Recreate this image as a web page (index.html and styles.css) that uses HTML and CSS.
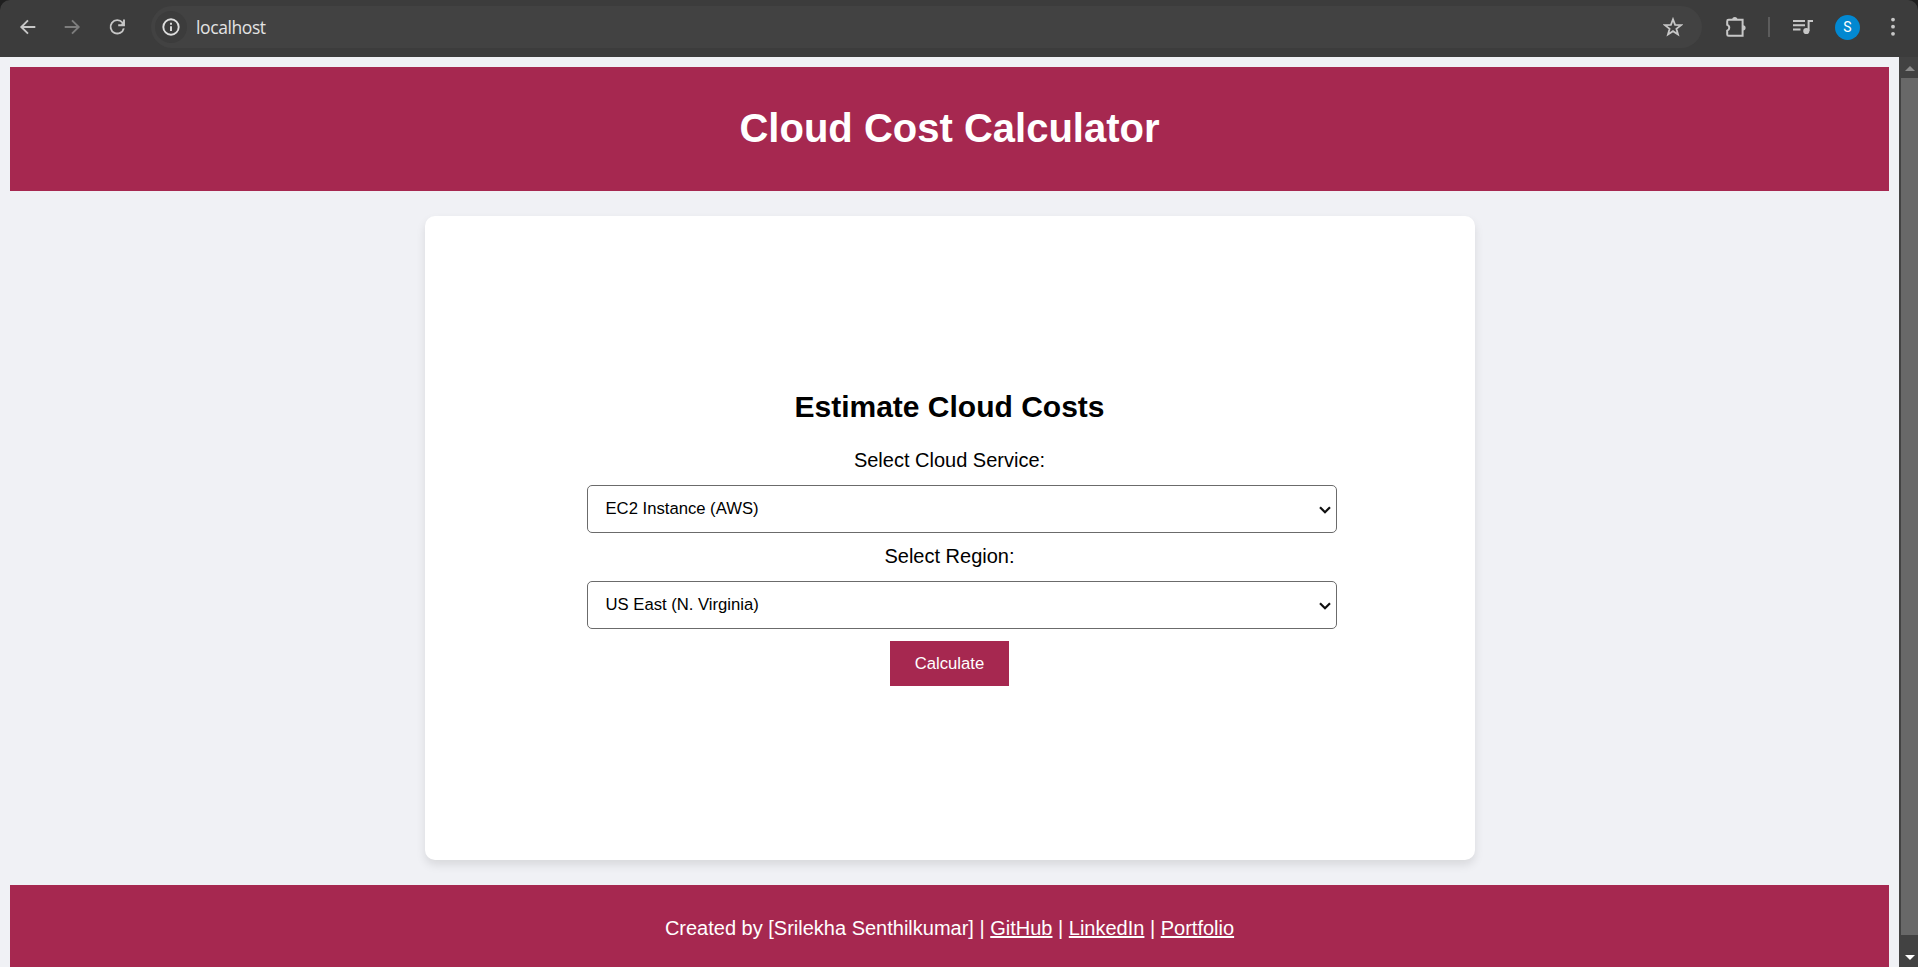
FILE: index.html
```html
<!DOCTYPE html>
<html lang="en">
<head>
<meta charset="utf-8">
<title>Cloud Cost Calculator</title>
<link rel="stylesheet" href="styles.css">
</head>
<body>
<div class="toolbar">
  <svg class="icon back" viewBox="0 0 20 20"><path d="M17.3 10H3.5M10 3.3 3.3 10l6.7 6.7"/></svg>
  <svg class="icon forward" viewBox="0 0 20 20"><path d="M2.7 10h13.8M10 3.3l6.7 6.7-6.7 6.7"/></svg>
  <svg class="icon reload" viewBox="0 0 20 20"><path d="M16.8 11.4A6.7 6.7 0 1 1 15.4 5.5L17 7.4M17 2.4v5.8h-5.8M16.4 5.2v2.2h-2.2"/></svg>
  <div class="address">
    <span class="site"><svg class="icon" viewBox="0 0 20 20"><circle cx="10" cy="10" r="7.7"/><path d="M10 9.2v4.7M10 5.8v1.9"/></svg></span>
    <span class="url">localhost</span>
    <svg class="icon star" viewBox="0 0 20 20"><path d="M10 2.3l2.1 5.5 6 .3-4.7 3.7 1.6 5.7-5-3.3-5 3.3 1.6-5.7L1.9 8.1l6-.3z"/></svg>
  </div>
  <svg class="puzzle" viewBox="0 0 24 24"><path class="line" d="M4.6 4.8h14v16h-14a1.4 1.4 0 0 1-1.4-1.4v-3.8a3 3 0 0 0 0-5.7V6.2a1.4 1.4 0 0 1 1.4-1.4z"/><path class="fill" d="M8.2 4.5a2.6 2.6 0 0 1 5.2 0zM19 10.2a2.6 2.6 0 0 1 0 5.2z"/></svg>
  <span class="divider"></span>
  <svg class="media" viewBox="0 0 20 16"><path class="line" d="M0 2h12M0 6.2h12M0 10.4h7.5M15.6 12V2h4.4"/><circle class="fill" cx="13.3" cy="12" r="3.1"/></svg>
  <span class="avatar">S</span>
  <svg class="dots" viewBox="0 0 6 20"><circle cx="3" cy="2.6" r="1.9"/><circle cx="3" cy="9.7" r="1.9"/><circle cx="3" cy="16.8" r="1.9"/></svg>
</div>
<div class="viewport">
  <div class="page">
    <header class="header"><h1>Cloud Cost Calculator</h1></header>
    <main class="card">
      <h2>Estimate Cloud Costs</h2>
      <label for="service">Select Cloud Service:</label>
      <div class="field">
        <select id="service"><option>EC2 Instance (AWS)</option></select>
        <svg class="chevron" viewBox="0 0 12 8"><path d="M1 1.2l5 5 5-5"/></svg>
      </div>
      <label for="region">Select Region:</label>
      <div class="field">
        <select id="region"><option>US East (N. Virginia)</option></select>
        <svg class="chevron" viewBox="0 0 12 8"><path d="M1 1.2l5 5 5-5"/></svg>
      </div>
      <button class="calculate">Calculate</button>
    </main>
    <footer class="footer">Created by [Srilekha Senthilkumar] | <a href="#">GitHub</a> | <a href="#">LinkedIn</a> | <a href="#">Portfolio</a></footer>
  </div>
  <div class="scrollbar">
    <svg class="arrow up" viewBox="0 0 10 5"><path d="M0 5l5-5 5 5z"/></svg>
    <span class="thumb"></span>
    <svg class="arrow down" viewBox="0 0 10 5"><path d="M0 0l5 5 5-5z"/></svg>
  </div>
</div>
</body>
</html>
```

FILE: styles.css
```css
* { box-sizing: border-box; }
body {
  margin: 0;
  height: 967px;
  overflow: hidden;
  display: flex;
  flex-direction: column;
  background: #1f1f1f;
  font-family: "Liberation Sans", Arial, sans-serif;
}
.toolbar {
  flex: none;
  height: 57px;
  padding: 6px 22px 9px 18px;
  display: flex;
  align-items: center;
  background: #3c3c3c;
  border-radius: 10px 10px 0 0;
}
.icon {
  flex: none;
  width: 20px;
  height: 20px;
  fill: none;
  stroke: #c7c7c7;
  stroke-width: 1.9;
}
.back { margin-right: 24px; }
.forward { margin-right: 25px; stroke: #7d7d7d; }
.reload { margin-right: 24px; }
.address {
  width: 1551px;
  height: 42px;
  padding: 0 19px 0 4px;
  display: flex;
  align-items: center;
  background: #424242;
  border-radius: 21px;
}
.site {
  width: 32px;
  height: 32px;
  display: grid;
  place-items: center;
  border-radius: 50%;
  background: #3c3c3c;
}
.site .icon { stroke: #dedede; }
.url {
  margin-left: 9px;
  flex: 1;
  color: #e3e3e3;
  font: 17.5px/24px "Open Sans", "Noto Sans", sans-serif;
  letter-spacing: -0.4px;
}
.star { stroke-width: 1.8; }
.puzzle { width: 24px; height: 24px; margin-left: 22px; }
.line { fill: none; stroke: #c7c7c7; stroke-width: 2; }
.fill { fill: #c7c7c7; }
.divider { width: 2px; height: 20px; margin-left: 20px; background: #5c5c5c; }
.media { width: 20px; height: 16px; margin-left: 23px; }
.avatar {
  width: 25px;
  height: 25px;
  margin-left: 22px;
  border-radius: 50%;
  background: #0288d1;
  color: #fff;
  font: 14px/25px Roboto, sans-serif;
  text-align: center;
}
.dots { width: 6px; height: 20px; margin-left: auto; fill: #c7c7c7; }
.viewport { flex: 1; min-height: 0; display: flex; }
.page {
  flex: 1;
  padding: 10px 10px 0;
  overflow: hidden;
  background: #f0f1f5;
}
.header {
  height: 124px;
  padding-top: 38px;
  background: #a62850;
  color: #fff;
  text-align: center;
}
h1 { margin: 0; font-size: 40px; line-height: 46px; }
.card {
  width: 1050px;
  height: 644px;
  margin: 25px auto;
  padding-top: 174px;
  display: flex;
  flex-direction: column;
  align-items: center;
  background: #fff;
  border-radius: 10px;
  box-shadow: 0 5px 10px rgba(0, 0, 0, 0.1);
}
h2 { margin: 0 0 24px; font-size: 30px; line-height: 34px; }
label { margin-bottom: 13px; font-size: 20px; line-height: 24px; }
.field {
  position: relative;
  width: 750px;
  margin: 0 0 11px 24px;
}
select {
  display: block;
  width: 100%;
  height: 48px;
  padding: 0 18px 2px 18px;
  appearance: none;
  border: 1px solid #6b6b6b;
  border-radius: 5px;
  background: #fff;
  color: #000;
  font: 16.67px "Liberation Sans", Arial, sans-serif;
}
.chevron {
  position: absolute;
  right: 6px;
  top: 21px;
  width: 12px;
  height: 8px;
  fill: none;
  stroke: #101010;
  stroke-width: 2.2;
}
.calculate {
  width: 119px;
  height: 45px;
  margin-top: 1px;
  padding: 0;
  border: 0;
  background: #a62850;
  color: #fff;
  font: 16.67px "Liberation Sans", Arial, sans-serif;
}
.footer {
  height: 100px;
  padding-top: 31px;
  background: #a62850;
  color: #fff;
  font-size: 20px;
  line-height: 24px;
  text-align: center;
}
.footer a { color: #fff; }
.scrollbar {
  width: 19px;
  padding: 9px 0 7px 2px;
  display: flex;
  flex-direction: column;
  align-items: center;
  background: #424242;
}
.arrow { flex: none; width: 10px; height: 5px; }
.up { fill: #8b8b8b; }
.down { fill: #fff; }
.thumb { width: 17px; height: 857px; margin: 7px 0 20px; background: #686868; }
```
